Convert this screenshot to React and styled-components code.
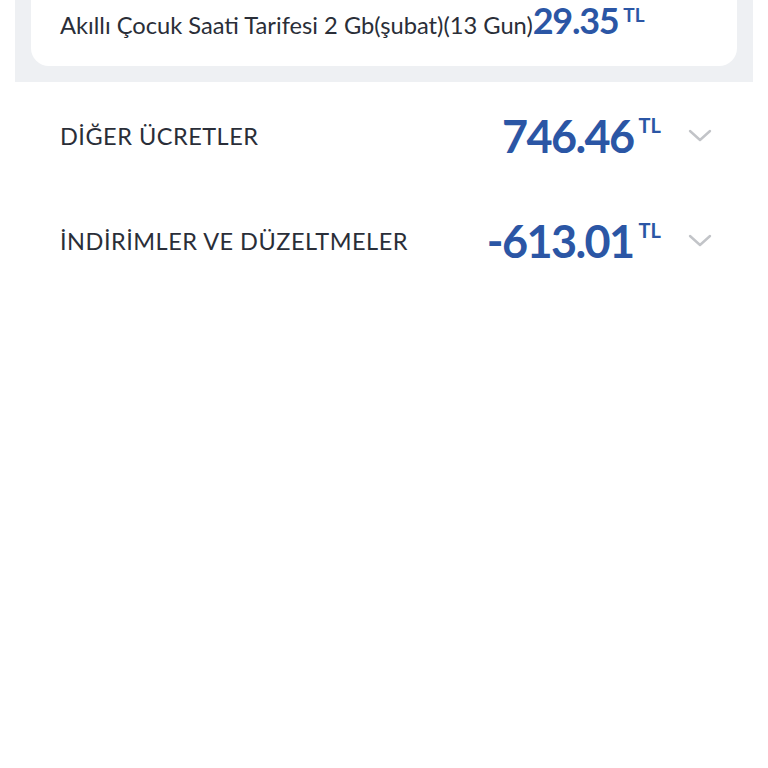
import React from 'react'
import styled, { createGlobalStyle } from 'styled-components'

const GlobalStyle = createGlobalStyle`
  html, body {
    margin: 0;
    padding: 0;
    background: #ffffff;
    font-family: 'Lato', 'Noto Sans', sans-serif;
  }
`

const rows = [
  { title: 'DİĞER ÜCRETLER', amount: '746.46' },
  { title: 'İNDİRİMLER VE DÜZELTMELER', amount: '-613.01' },
]

function Chevron() {
  return (
    <svg width="24" height="14" viewBox="0 0 24 14" fill="none">
      <path d="M2 2 L12 11 L22 2" stroke="#c2c4c8" strokeWidth="2.4" strokeLinecap="round" strokeLinejoin="round" />
    </svg>
  )
}

export default function App() {
  return (
    <>
      <GlobalStyle />
      <Page>
        <Panel>
          <Card>
            <TariffLine>
              <TariffName>Akıllı Çocuk Saati Tarifesi 2 Gb(şubat)(13 Gun)</TariffName>
              <SmallAmount>29.35</SmallAmount>
              <Currency small>TL</Currency>
            </TariffLine>
          </Card>
        </Panel>
        <List>
          {rows.map((row) => (
            <Row key={row.title}>
              <RowTitle>{row.title}</RowTitle>
              <AmountBox>
                <BigAmount>{row.amount}</BigAmount>
                <Currency>TL</Currency>
              </AmountBox>
              <ChevronBox>
                <Chevron />
              </ChevronBox>
            </Row>
          ))}
        </List>
      </Page>
    </>
  )
}

const Page = styled.div`
  width: 768px;
  height: 768px;
  background: #ffffff;
  overflow: hidden;
`

const Panel = styled.div`
  margin: 0 15px;
  background: #eef0f3;
  padding: 0 16px 16px;
`

const Card = styled.div`
  background: #ffffff;
  border-radius: 0 0 18px 18px;
  height: 66px;
  padding: 0 29px;
  box-sizing: border-box;
`

const TariffLine = styled.div`
  display: flex;
  align-items: baseline;
  height: 40px;
  line-height: 40px;
`

const TariffName = styled.span`
  font-size: 23.7px;
  color: #2a2e38;
  letter-spacing: 0;
`

const SmallAmount = styled.span`
  font-size: 36px;
  font-weight: 700;
  color: #2b56a5;
  letter-spacing: -1.3px;
`

const Currency = styled.span`
  font-size: ${(p) => (p.small ? '19px' : '20px')};
  font-weight: 700;
  color: #2b56a5;
  margin-left: 5px;
  line-height: 1;
  align-self: flex-start;
  margin-top: ${(p) => (p.small ? '5px' : '2px')};
`

const List = styled.div`
  display: flex;
  flex-direction: column;
  padding: 1px 56px 0 60px;
`

const Row = styled.div`
  display: flex;
  align-items: center;
  height: 105px;
`

const RowTitle = styled.div`
  flex: 1;
  font-size: 23.5px;
  color: #2a2e38;
  letter-spacing: 0.5px;
`

const AmountBox = styled.div`
  display: flex;
  align-items: flex-start;
`

const BigAmount = styled.span`
  font-size: 45px;
  font-weight: 700;
  color: #2b56a5;
  line-height: 46px;
  letter-spacing: -1.6px;
`

const ChevronBox = styled.div`
  width: 24px;
  margin-left: 27px;
  display: flex;
  align-items: center;
`
